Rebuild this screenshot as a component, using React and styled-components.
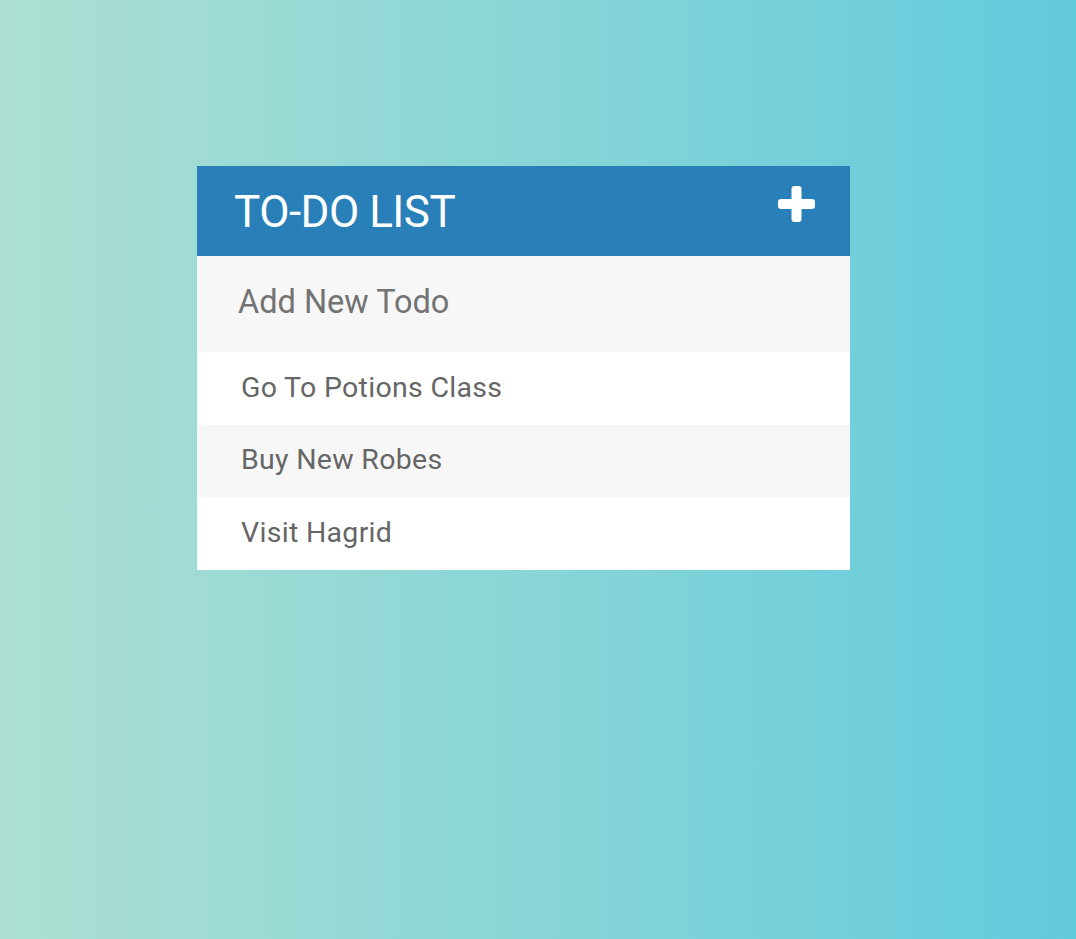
import React, { useState } from 'react';
import styled, { createGlobalStyle } from 'styled-components';

const Global = createGlobalStyle`
  html, body {
    margin: 0;
    padding: 0;
    height: 100%;
  }
  body {
    font-family: Roboto, "Liberation Sans", sans-serif;
    background: linear-gradient(to right, #addfd2, #62cbdc);
    min-height: 939px;
  }
`;

const Page = styled.div`
  padding: 166px 0 0 197px;
`;

const Card = styled.div`
  width: 653px;
  background: #fff;
`;

const Header = styled.div`
  height: 90px;
  background: #2980b9;
  display: flex;
  align-items: center;
  justify-content: space-between;
  padding: 0 35px 0 37px;
  box-sizing: border-box;
`;

const Title = styled.h1`
  margin: 0;
  font-size: 44px;
  font-weight: 400;
  color: #fff;
  text-transform: uppercase;
  letter-spacing: -0.5px;
  padding-top: 2px;
`;

const AddButton = styled.button`
  border: none;
  background: none;
  padding: 0;
  display: flex;
  margin-top: -14px;
  cursor: pointer;
`;

const Input = styled.input`
  display: block;
  width: 100%;
  height: 96px;
  box-sizing: border-box;
  border: none;
  outline: none;
  background: #f7f7f7;
  padding: 0 0 4px 41px;
  font-family: Roboto, "Liberation Sans", sans-serif;
  font-size: 32.5px;
  color: #666;
  &::placeholder {
    color: #737373;
  }
`;

const List = styled.ul`
  list-style: none;
  margin: 0;
  padding: 0;
`;

const Item = styled.li`
  height: 72.6px;
  display: flex;
  align-items: center;
  padding: 0 0 2px 44px;
  box-sizing: border-box;
  font-size: 28.5px;
  letter-spacing: 0.3px;
  color: #666;
  background: ${p => (p.$odd ? '#f7f7f7' : '#fff')};
`;

const PlusIcon = () => (
  <svg width="37" height="36" viewBox="0 0 37 36">
    <path
      d="M13.5 3 Q13.5 0 16.5 0 H20.5 Q23.5 0 23.5 3 V13 H34 Q37 13 37 16 V20 Q37 23 34 23 H23.5 V33 Q23.5 36 20.5 36 H16.5 Q13.5 36 13.5 33 V23 H3 Q0 23 0 20 V16 Q0 13 3 13 H13.5 Z"
      fill="#fff"
    />
  </svg>
);

const todos = ['Go To Potions Class', 'Buy New Robes', 'Visit Hagrid'];

export default function App() {
  const [text, setText] = useState('');
  return (
    <>
      <Global />
      <Page>
        <Card>
          <Header>
            <Title>To-Do List</Title>
            <AddButton aria-label="add">
              <PlusIcon />
            </AddButton>
          </Header>
          <Input
            placeholder="Add New Todo"
            value={text}
            onChange={e => setText(e.target.value)}
          />
          <List>
            {todos.map((t, i) => (
              <Item key={t} $odd={i % 2 === 1}>
                {t}
              </Item>
            ))}
          </List>
        </Card>
      </Page>
    </>
  );
}
